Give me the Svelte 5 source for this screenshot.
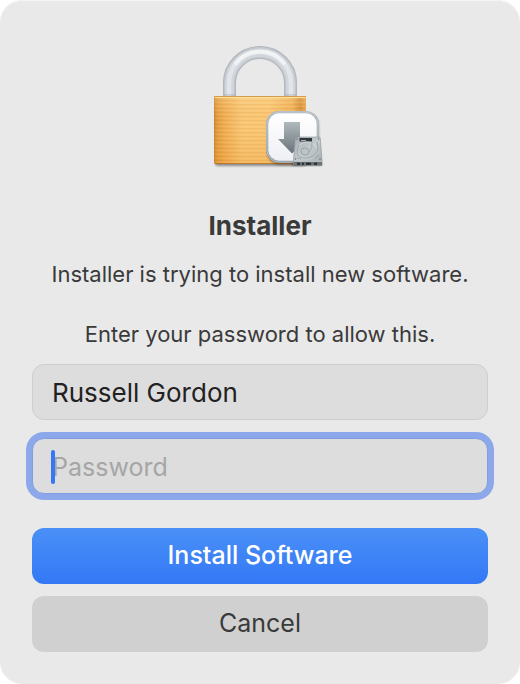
<script>
  let account = $state('Russell Gordon');
  let password = $state('');
  const grooves = Array.from({ length: 16 }, (_, i) => 61 + i * 4);
</script>

<main class="dialog">
  <svg class="lock" viewBox="0 0 128 128" aria-hidden="true">
    <defs>
      <linearGradient id="gold" x1="0" x2="1" y1="0" y2="0">
        <stop offset="0" stop-color="#c9832b" />
        <stop offset=".04" stop-color="#e39c3f" />
        <stop offset=".12" stop-color="#f0ae54" />
        <stop offset=".3" stop-color="#fac878" />
        <stop offset=".6" stop-color="#fbc977" />
        <stop offset=".85" stop-color="#f0b057" />
        <stop offset=".94" stop-color="#d08a35" />
        <stop offset="1" stop-color="#e8a64c" />
      </linearGradient>
      <linearGradient id="depth" x1="0" x2="0" y1="0" y2="1">
        <stop offset="0" stop-color="#fff0c0" stop-opacity=".25" />
        <stop offset=".4" stop-color="#f0a030" stop-opacity="0" />
        <stop offset="1" stop-color="#e08a18" stop-opacity=".25" />
      </linearGradient>
      <linearGradient id="tile" x1="0" x2="0" y1="0" y2="1">
        <stop offset="0" stop-color="#ffffff" />
        <stop offset="1" stop-color="#eff0f4" />
      </linearGradient>
      <linearGradient id="rim" x1="0" x2="0" y1="0" y2="1">
        <stop offset="0" stop-color="#aeb8bf" />
        <stop offset="1" stop-color="#8d98a2" />
      </linearGradient>
      <linearGradient id="arrow" x1="0" x2="0" y1="0" y2="1">
        <stop offset="0" stop-color="#b0b9bb" />
        <stop offset="1" stop-color="#69737a" />
      </linearGradient>
      <linearGradient id="disk" x1="0" x2="1" y1="0" y2="1">
        <stop offset="0" stop-color="#a5adb1" />
        <stop offset=".5" stop-color="#c4cbcf" />
        <stop offset="1" stop-color="#a2abaf" />
      </linearGradient>
      <filter id="soft" x="-20%" y="-20%" width="140%" height="140%">
        <feGaussianBlur stdDeviation="1" />
      </filter>
    </defs>

    <rect x="19" y="120" width="91" height="6" rx="3" fill="#000" opacity=".4" filter="url(#soft)" />

    <g fill="none">
      <path d="M33.5 57V43a30.5 30.5 0 0 1 61 0v14" stroke="#adb1b8" stroke-width="13" />
      <path d="M33.5 57V43a30.5 30.5 0 0 1 61 0v14" stroke="#c2c6cd" stroke-width="11.4" />
      <path d="M33.5 57V43a30.5 30.5 0 0 1 61 0v14" stroke="#d2d6dc" stroke-width="8.6" />
      <path d="M33 57V43a31 31 0 0 1 62 0v14" stroke="#e1e4e8" stroke-width="4.6" />
      <path d="M40 23a31 31 0 0 1 48 0" stroke="#f8f9fb" stroke-width="4" stroke-linecap="round" opacity=".7" />
      <path d="M28 55h11M89 55h11" stroke="#8e9196" stroke-width="2" opacity=".25" />
    </g>

    <rect x="18" y="56" width="92" height="68" rx="2" fill="url(#gold)" />
    <rect x="18" y="56" width="92" height="68" rx="2" fill="url(#depth)" />
    {#each grooves as y}
      <path d="M19 {y}h90" stroke="#c8761c" stroke-width="1" opacity=".25" />
      <path d="M19 {y + 1}h90" stroke="#ffe2a2" stroke-width="1" opacity=".3" />
    {/each}
    <path d="M18 56.5h92" stroke="#d99a48" />
    <path d="M19 57.5h90" stroke="#ffe3a5" />
    <path d="M19 123.5h90" stroke="#a86520" opacity=".7" />

    <rect x="71" y="73" width="52" height="52" rx="13" fill="#4a3210" opacity=".4" filter="url(#soft)" />
    <rect x="70" y="71" width="53" height="52" rx="13" fill="url(#rim)" />
    <rect x="71" y="72" width="51" height="50" rx="12" fill="none" stroke="#cdd5da" stroke-width="1" opacity=".6" />
    <rect x="72.3" y="73.3" width="48.4" height="47.4" rx="10.5" fill="url(#tile)" />
    <path d="M88 82h16v17h7L96 113.5 82 99h6z" fill="url(#arrow)" />

    <path d="M96 123h30v3H96z" fill="#000" opacity=".3" filter="url(#soft)" />
    <path d="M100 97h23.200q.8 0 1 1l1.800 22v5H97.500v-5L99.200 98q.1-1 .8-1z" fill="url(#disk)" stroke="#879095" stroke-width=".6" />
    <path d="M97.500 121.500H126v4H97.500z" fill="#6b7275" />
    <path d="M97.500 121.300H126" stroke="#c9cfd2" stroke-width=".8" />
    <path d="M101 123.700h3M106 123.700h2M110 123.700h5M118 123.700h3" stroke="#25292b" stroke-width="2" />
    <path d="M103.500 98h12.500v3.500h-12.500z" fill="#30363a" />
    <path d="M105 100.500h5" stroke="#aab3b7" stroke-width="1" />
    <g fill="none" stroke="#939da2">
      <ellipse cx="111.500" cy="110.500" rx="10" ry="8.500" stroke="#d8dee1" stroke-width=".8" />
      <path d="M121 102q2.500 9-3 14-7 4-14 1-5-4-1-12" stroke-width=".8" />
      <ellipse cx="109" cy="111.500" rx="4" ry="3.600" fill="#bcc4c8" stroke-width=".8" />
      <path d="M113 112q4-4 3-10M101 118l4 1M119 118l4-3" stroke-width=".8" />
    </g>
    <g fill="#5f686d">
      <circle cx="101" cy="99" r=".7" /><circle cx="122.500" cy="99" r=".7" />
      <circle cx="99.500" cy="119" r=".7" /><circle cx="124" cy="119" r=".7" />
    </g>
  </svg>

  <h1>Installer</h1>
  <p>Installer is trying to install new software.</p>
  <p class="prompt">Enter your password to allow this.</p>

  <form onsubmit={(e) => e.preventDefault()}>
    <input type="text" aria-label="User name" autocomplete="username" bind:value={account} />
    <div class="secure">
      <input type="password" aria-label="Password" placeholder="Password" autocomplete="current-password" bind:value={password} />
      {#if !password}<span class="caret"></span>{/if}
    </div>
    <div class="actions">
      <button class="primary" type="submit">Install Software</button>
      <button type="button">Cancel</button>
    </div>
  </form>
</main>

<style>
  :global(body) {
    margin: 0;
    background: #fff;
  }

  .dialog {
    box-sizing: border-box;
    display: flex;
    flex-direction: column;
    align-items: center;
    padding: 40px 32px 32px;
    border-radius: 22px;
    background: #e9e9e9;
    box-shadow: inset 0 1px 1px #f5f5f5;
    color: #3a3a3a;
    font-family: Inter, "Liberation Sans", sans-serif;
    text-align: center;
  }

  .lock {
    display: block;
    width: 128px;
    height: 128px;
  }

  h1 {
    margin: 42px 0 0;
    font-size: 26px;
    line-height: 32px;
    font-weight: 700;
  }

  p {
    margin: 16px 0 0;
    font-size: 22px;
    line-height: 32px;
  }

  .prompt {
    margin-top: 28px;
  }

  form {
    display: flex;
    flex-direction: column;
    gap: 18px;
    width: 100%;
    margin-top: 14px;
  }

  input {
    box-sizing: border-box;
    display: block;
    width: 100%;
    height: 56px;
    margin: 0;
    padding: 0 19px;
    border: 1px solid #cfcfcf;
    border-radius: 12px;
    outline: none;
    background: #dddddd;
    color: #222;
    font: 26px Inter, "Liberation Sans", sans-serif;
  }

  .secure {
    position: relative;
  }

  .secure input {
    padding-top: 2px;
    border-color: #7e9de2;
    box-shadow: 0 0 0 6px #8ca8eb;
    font-size: 25px;
  }

  .secure input:placeholder-shown {
    caret-color: transparent;
  }

  input::placeholder {
    color: #a6a6a6;
    opacity: 1;
  }

  .caret {
    position: absolute;
    top: 12px;
    left: 19px;
    width: 4px;
    height: 34px;
    border-radius: 2px;
    background: #3478f6;
    pointer-events: none;
  }

  .actions {
    display: flex;
    flex-direction: column;
    gap: 12px;
    margin-top: 16px;
  }

  button {
    height: 56px;
    padding: 0 20px 2px;
    border: 0;
    border-radius: 12px;
    background: #d0d0d0;
    color: #3a3a3a;
    font: 25px Inter, "Liberation Sans", sans-serif;
  }

  .primary {
    background: linear-gradient(#4a90f7, #3478f6);
    color: #fff;
    font-weight: 500;
  }
</style>
